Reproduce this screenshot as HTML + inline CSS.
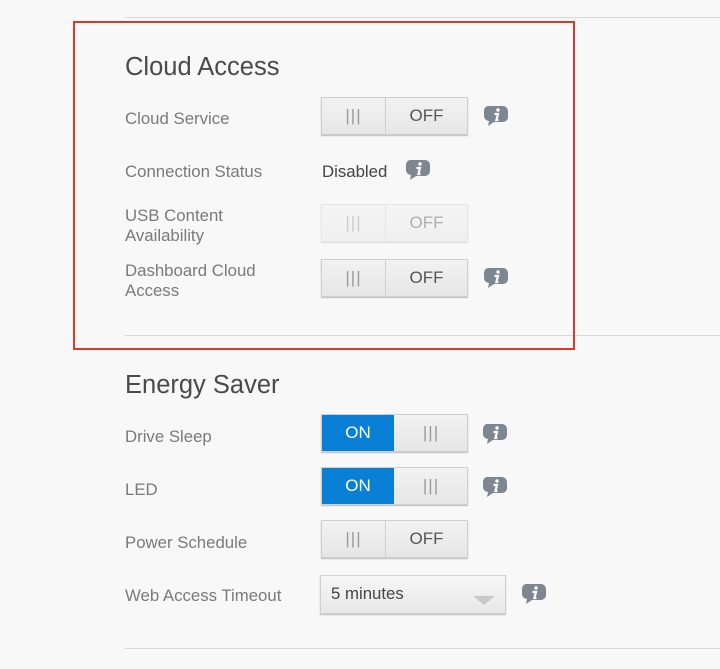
<!DOCTYPE html>
<html><head><style>
body{margin:0;width:720px;height:669px;background:#f8f8f8;font-family:"Liberation Sans",sans-serif;position:relative;overflow:hidden}
.a{position:absolute}
.line{position:absolute;left:125px;right:0;height:1px;background:#d8d8d8}
h2{position:absolute;margin:0;font-weight:normal;font-size:25.5px;color:#4a4a4a;left:125px}
.lbl{position:absolute;left:125px;font-size:16.8px;color:#7a7a7a;line-height:20px}
.tg{position:absolute;left:321px;width:145px;height:36px;border:1px solid #cfcfcf;background:linear-gradient(#f2f2f2,#e6e6e6);box-shadow:0 1px 1px #bbb;font-size:17px;color:#555}
.tg .g{position:absolute;top:0;bottom:0;left:0;width:63px;border-right:1px solid #cfcfcf;text-align:center;line-height:36px;color:#999;letter-spacing:1px}
.tg .o{position:absolute;top:0;bottom:0;left:64px;right:0;text-align:center;line-height:36px}
.tg.on .b{position:absolute;top:0;bottom:0;left:0;width:72px;background:#0a7fd6;color:#fff;text-align:center;line-height:36px}
.tg.on .g{left:73px;right:0;width:auto;border:none}
.tg.dis{opacity:.45}
.i{position:absolute;width:24px;height:22px}
</style></head><body>
<div class="line" style="top:17px"></div>
<div class="line" style="top:335px"></div>
<div class="line" style="top:648px"></div>
<div class="a" style="left:73px;top:21px;width:498px;height:325px;border:2px solid #d9392b"></div>

<h2 style="top:53px">Cloud Access</h2>
<div class="lbl" style="top:109px">Cloud Service</div>
<div class="tg" style="top:97px"><div class="g">|||</div><div class="o">OFF</div></div>
<div class="lbl" style="top:162px">Connection Status</div>
<div class="a" style="left:322px;top:162px;font-size:16.8px;color:#444">Disabled</div>
<div class="lbl" style="top:206px">USB Content<br>Availability</div>
<div class="tg dis" style="top:204px"><div class="g">|||</div><div class="o">OFF</div></div>
<div class="lbl" style="top:261px">Dashboard Cloud<br>Access</div>
<div class="tg" style="top:259px"><div class="g">|||</div><div class="o">OFF</div></div>

<h2 style="top:371px">Energy Saver</h2>
<div class="lbl" style="top:427px">Drive Sleep</div>
<div class="tg on" style="top:414px"><div class="b">ON</div><div class="g">|||</div></div>
<div class="lbl" style="top:480px">LED</div>
<div class="tg on" style="top:467px"><div class="b">ON</div><div class="g">|||</div></div>
<div class="lbl" style="top:533px">Power Schedule</div>
<div class="tg" style="top:520px"><div class="g">|||</div><div class="o">OFF</div></div>
<div class="lbl" style="top:586px">Web Access Timeout</div>
<div class="a" style="left:320px;top:575px;width:184px;height:37px;border:1px solid #d0d0d0;background:linear-gradient(#f6f6f6,#e8e8e8);box-shadow:0 1px 1px #bbb;font-size:16.8px;color:#444;line-height:36px"><span style="padding-left:10px">5 minutes</span>
<div class="a" style="left:152px;top:20px;width:0;height:0;border-left:11px solid transparent;border-right:11px solid transparent;border-top:9px solid #c8c8c8"></div></div>

<svg width="0" height="0" style="position:absolute"><defs><g id="ic"><path d="M6 1h13a5 5 0 0 1 5 5v6a5 5 0 0 1-5 5H10l-6 4 1-5a5 5 0 0 1-5-5V6a5 5 0 0 1 6-5z" fill="#7d8792"/><circle cx="14" cy="5" r="1.7" fill="#fff"/><path d="M10.5 9h3.5l-1.6 6h2" stroke="#fff" stroke-width="2.2" fill="none"/></g></defs></svg>
<svg class="i" style="left:484px;top:105px" viewBox="0 0 24 22"><use href="#ic"/></svg>
<svg class="i" style="left:406px;top:159px" viewBox="0 0 24 22"><use href="#ic"/></svg>
<svg class="i" style="left:484px;top:267px" viewBox="0 0 24 22"><use href="#ic"/></svg>
<svg class="i" style="left:483px;top:423px" viewBox="0 0 24 22"><use href="#ic"/></svg>
<svg class="i" style="left:483px;top:476px" viewBox="0 0 24 22"><use href="#ic"/></svg>
<svg class="i" style="left:522px;top:583px" viewBox="0 0 24 22"><use href="#ic"/></svg>
</body></html>
